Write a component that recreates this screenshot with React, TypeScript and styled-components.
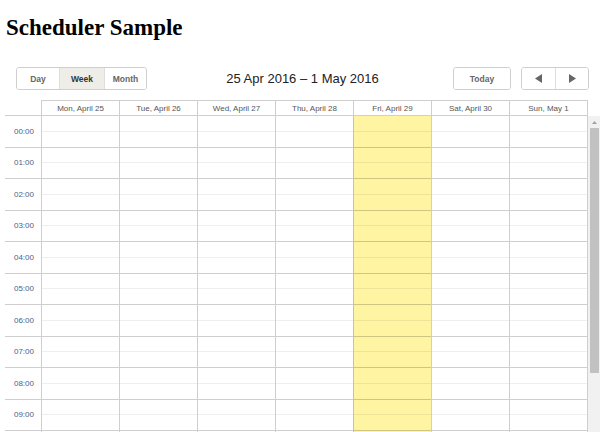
import styled, { createGlobalStyle } from "styled-components";

const GlobalStyle = createGlobalStyle`
  body {
    margin: 0;
    background: #fff;
  }
`;

const days = [
  { label: "Mon, April 25" },
  { label: "Tue, April 26" },
  { label: "Wed, April 27" },
  { label: "Thu, April 28" },
  { label: "Fri, April 29", today: true },
  { label: "Sat, April 30" },
  { label: "Sun, May 1" },
];

// only the hours that fit in the visible part of the scroll area
const hours = Array.from({ length: 10 }, (_, i) => `${String(i).padStart(2, "0")}:00`);

const HOUR = 31.5;
const DARK = "rgba(0, 0, 0, 0.19)";
const LIGHT = "rgba(0, 0, 0, 0.065)";

const Page = styled.div`
  padding-left: 5px;
`;

const Title = styled.h1`
  font-family: "Liberation Serif", "Times New Roman", serif;
  font-size: 23px;
  line-height: 25px;
  font-weight: bold;
  color: #000;
  margin: 15px 0 0 1px;
`;

const Toolbar = styled.div`
  display: grid;
  grid-template-columns: 1fr auto 1fr;
  align-items: center;
  padding: 0 11px;
  margin-top: 27px;
  height: 23px;
  font-family: "Liberation Sans", Arial, sans-serif;
`;

const Left = styled.div`
  display: flex;
  justify-content: flex-start;
`;

const Right = styled.div`
  display: flex;
  justify-content: flex-end;
  gap: 10px;
`;

const Group = styled.div`
  display: flex;
  height: 23px;
  border: 1px solid #cfcfcf;
  border-radius: 3px;
  overflow: hidden;
  box-sizing: border-box;
`;

const Segment = styled.div<{ $active?: boolean; $w: number }>`
  width: ${(p) => p.$w}px;
  box-sizing: border-box;
  display: flex;
  align-items: center;
  justify-content: center;
  font-size: 8.5px;
  font-weight: bold;
  color: ${(p) => (p.$active ? "#333" : "#666")};
  background: ${(p) => (p.$active ? "#efede7" : "#fff")};
  & + & {
    border-left: 1px solid #dedede;
  }
`;

const DateRange = styled.div`
  font-size: 13px;
  color: #222;
  text-align: center;
`;

const Scheduler = styled.div`
  margin-top: 10px;
  font-family: "Liberation Sans", Arial, sans-serif;
`;

const HeaderRow = styled.div`
  display: flex;
  height: 16px;
`;

const Corner = styled.div`
  width: 36px;
  border-bottom: 1px solid ${DARK};
  box-sizing: border-box;
`;

const HeaderCell = styled.div<{ $last?: boolean }>`
  width: ${(p) => (p.$last ? 79 : 78)}px;
  box-sizing: border-box;
  border-top: 1px solid ${DARK};
  border-bottom: 1px solid ${DARK};
  border-left: 1px solid ${DARK};
  border-right: ${(p) => (p.$last ? `1px solid ${DARK}` : "none")};
  display: flex;
  align-items: center;
  justify-content: center;
  font-size: 8px;
  color: #555;
  white-space: nowrap;
`;

const Body = styled.div`
  display: flex;
  height: 317px;
  overflow: hidden;
`;

const TimeColumn = styled.div`
  width: 36px;
  flex-shrink: 0;
`;

const TimeCell = styled.div`
  height: ${HOUR}px;
  box-sizing: border-box;
  border-bottom: 1px solid ${DARK};
  display: flex;
  align-items: center;
  justify-content: flex-end;
  padding-right: 7px;
  font-size: 8px;
  color: #4b6185;
`;

const DayColumn = styled.div<{ $today?: boolean; $last?: boolean }>`
  width: ${(p) => (p.$last ? 79 : 78)}px;
  flex-shrink: 0;
  box-sizing: border-box;
  border-left: 1px solid ${DARK};
  border-right: ${(p) => (p.$last ? `1px solid ${DARK}` : "none")};
  background: ${(p) => (p.$today ? "#fff4a1" : "#fff")};
`;

const Slot = styled.div<{ $hourEnd?: boolean }>`
  height: ${HOUR / 2}px;
  box-sizing: border-box;
  border-bottom: 1px solid ${(p) => (p.$hourEnd ? DARK : LIGHT)};
`;

const Scrollbar = styled.div`
  width: 12px;
  flex-shrink: 0;
  background: #f1f1f1;
  display: flex;
  flex-direction: column;
  align-items: center;
`;

const ScrollArrow = styled.div`
  height: 12px;
  display: flex;
  align-items: center;
  justify-content: center;
`;

const Thumb = styled.div`
  width: 9px;
  height: 245px;
  background: #c1c1c1;
`;

const Tri = ({ dir }: { dir: "left" | "right" }) => (
  <svg width="7" height="9" viewBox="0 0 7 9">
    <polygon points={dir === "left" ? "7,0 7,9 0,4.5" : "0,0 0,9 7,4.5"} fill="#666" />
  </svg>
);

export default function App() {
  return (
    <Page>
      <GlobalStyle />
      <Title>Scheduler Sample</Title>

      <Toolbar>
        <Left>
          <Group>
            <Segment $w={42}>Day</Segment>
            <Segment $w={45} $active>
              Week
            </Segment>
            <Segment $w={42}>Month</Segment>
          </Group>
        </Left>
        <DateRange>25 Apr 2016 – 1 May 2016</DateRange>
        <Right>
          <Group>
            <Segment $w={56}>Today</Segment>
          </Group>
          <Group>
            <Segment $w={33}>
              <Tri dir="left" />
            </Segment>
            <Segment $w={33}>
              <Tri dir="right" />
            </Segment>
          </Group>
        </Right>
      </Toolbar>

      <Scheduler>
        <HeaderRow>
          <Corner />
          {days.map((d, i) => (
            <HeaderCell key={d.label} $last={i === days.length - 1}>
              {d.label}
            </HeaderCell>
          ))}
        </HeaderRow>
        <Body>
          <TimeColumn>
            {hours.map((h) => (
              <TimeCell key={h}>{h}</TimeCell>
            ))}
          </TimeColumn>
          {days.map((d, i) => (
            <DayColumn key={d.label} $today={d.today} $last={i === days.length - 1}>
              {hours.map((h) => [
                <Slot key={h + "a"} />,
                <Slot key={h + "b"} $hourEnd />,
              ])}
            </DayColumn>
          ))}
          <Scrollbar>
            <ScrollArrow>
              <svg width="5" height="3" viewBox="0 0 5 3">
                <polygon points="0,3 5,3 2.5,0" fill="#a3a3a3" />
              </svg>
            </ScrollArrow>
            <Thumb />
          </Scrollbar>
        </Body>
      </Scheduler>
    </Page>
  );
}
